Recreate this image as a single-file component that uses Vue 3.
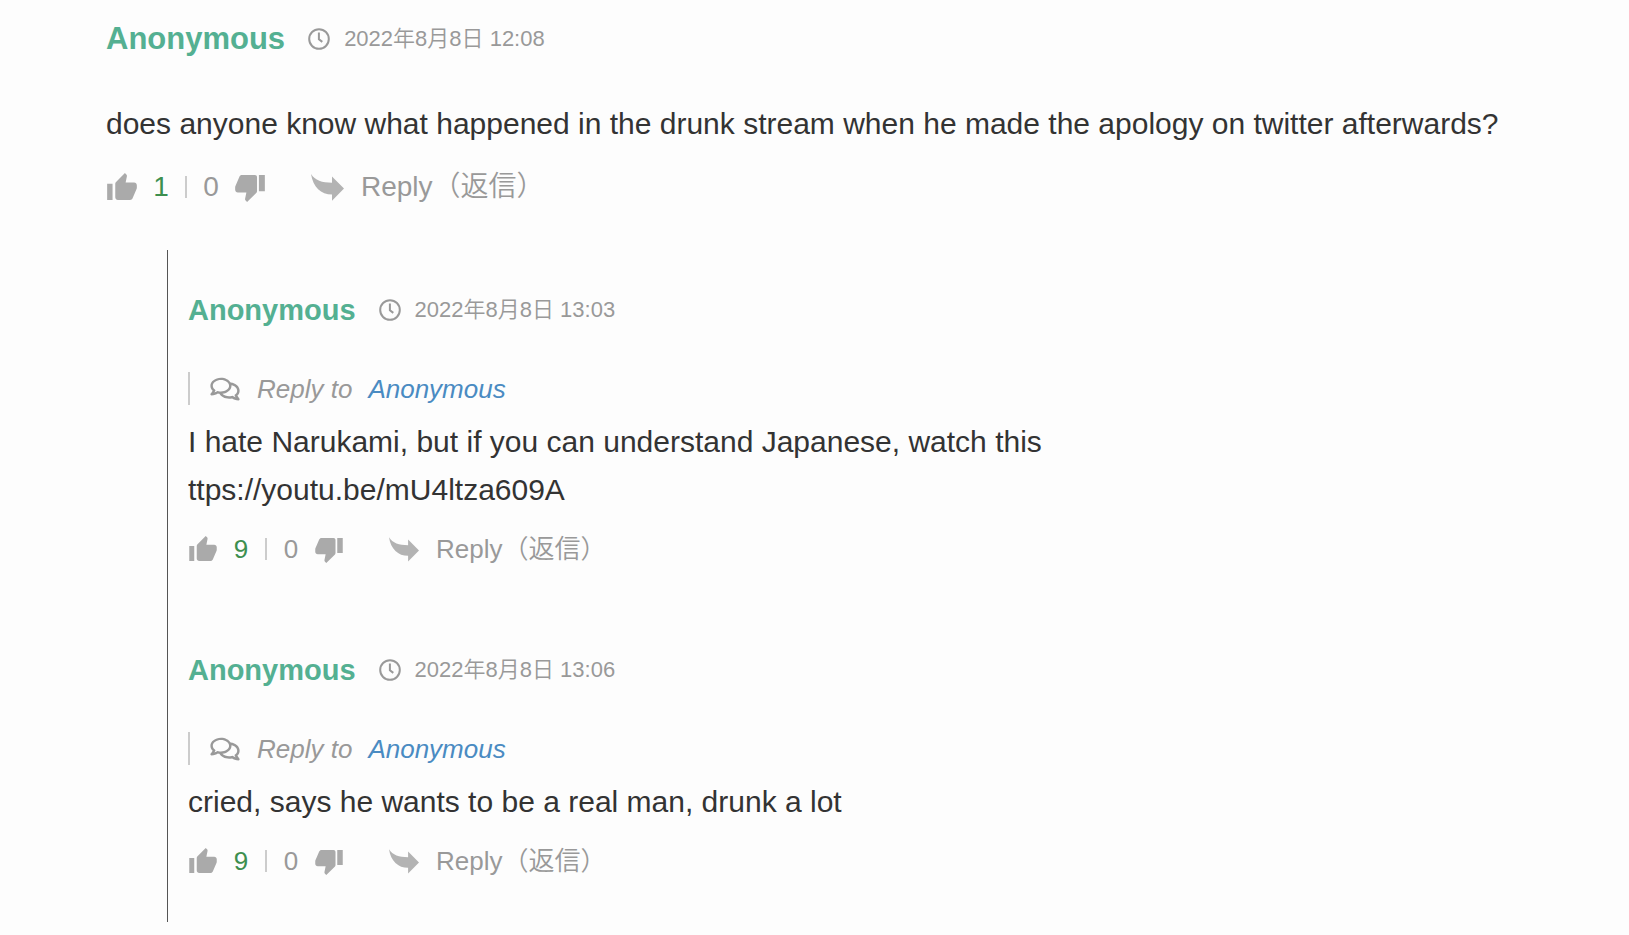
<script setup>
const thread = {
  id: 1,
  author: 'Anonymous',
  date: '2022年8月8日 12:08',
  lines: ['does anyone know what happened in the drunk stream when he made the apology on twitter afterwards?'],
  up: 1,
  down: 0,
}
const replies = [
  {
    id: 2,
    author: 'Anonymous',
    date: '2022年8月8日 13:03',
    to: 'Anonymous',
    lines: ['I hate Narukami, but if you can understand Japanese, watch this', 'ttps://youtu.be/mU4ltza609A'],
    up: 9,
    down: 0,
  },
  {
    id: 3,
    author: 'Anonymous',
    date: '2022年8月8日 13:06',
    to: 'Anonymous',
    lines: ['cried, says he wants to be a real man, drunk a lot'],
    up: 9,
    down: 0,
  },
]
const groups = [
  { name: 'root', items: [thread] },
  { name: 'replies', items: replies },
]
</script>

<template>
  <main class="thread">
    <section v-for="group in groups" :key="group.name" :class="group.name">
      <article v-for="item in group.items" :key="item.id" class="comment">
        <header class="head">
          <span class="author">{{ item.author }}</span>
          <svg class="clock" viewBox="0 0 22 22" aria-hidden="true">
            <circle cx="11" cy="11" r="9.8" />
            <path d="M10.900 4.500V11.200L14.300 13.900" />
          </svg>
          <time class="date">{{ item.date }}</time>
        </header>
        <div v-if="item.to" class="quote">
          <svg class="bubbles" viewBox="0 0 576 512" aria-hidden="true">
            <path d="M532 386.2c27.5-27.1 44-61.1 44-98.2 0-80-76.500-146.100-176.200-157.900C368.300 72.500 294.300 32 208 32 93.100 32 0 103.600 0 192c0 37 16.500 71 44 98.200-15.300 30.700-37.300 54.500-37.700 54.900-6.300 6.700-8.100 16.500-4.400 25 3.600 8.500 12 14 21.200 14 53.500 0 96.700-20.200 125.200-38.800 9.200 2.100 18.700 3.700 28.400 4.900C208.100 407.600 281.800 448 368 448c20.800 0 40.800-2.400 59.800-6.800C456.300 459.700 499.400 480 553 480c9.200 0 17.500-5.500 21.200-14 3.600-8.500 1.900-18.300-4.400-25-.4-.3-22.500-24.100-37.800-54.800zm-392.800-92.300L122.100 305c-14.100 9.100-28.500 16.300-43.100 21.400 2.700-4.700 5.400-9.700 8-14.800l15.500-31.100L77.700 256C64.200 242.600 48 220.700 48 192c0-60.700 73.300-112 160-112s160 51.300 160 112-73.300 112-160 112c-16.500 0-33-1.900-49-5.600l-19.800-4.500zM498.300 352l-24.700 24.400 15.500 31.100c2.600 5.100 5.300 10.100 8 14.800-14.600-5.100-29-12.300-43.100-21.400l-17.100-11.100-19.900 4.600c-16 3.700-32.500 5.600-49 5.600-54 0-102.200-20.100-131.300-49.700C338 339.500 416 272.900 416 192c0-3.400-.4-6.700-.7-10C479.700 196.500 528 238.800 528 288c0 28.700-16.200 50.600-29.700 64z" />
          </svg>
          <span>Reply to</span>
          <a class="target" href="#">{{ item.to }}</a>
        </div>
        <div class="body">
          <p v-for="line in item.lines" :key="line">{{ line }}</p>
        </div>
        <footer class="actions">
          <button type="button" class="vote" aria-label="Vote up">
            <svg viewBox="1 1 22 20" aria-hidden="true">
              <path d="M1 21h4V9H1v12zm22-11c0-1.100-.9-2-2-2h-6.310l.95-4.570.03-.32c0-.41-.17-.79-.44-1.060L14.170 1 7.590 7.590C7.220 7.950 7 8.450 7 9v10c0 1.100.9 2 2 2h9c.83 0 1.540-.5 1.840-1.220l3.020-7.050c.09-.23.14-.47.14-.73v-2z" />
            </svg>
          </button>
          <span class="count up">{{ item.up }}</span>
          <span class="divider"></span>
          <span class="count">{{ item.down }}</span>
          <button type="button" class="vote down" aria-label="Vote down">
            <svg viewBox="1 3 22 20" aria-hidden="true">
              <path d="M15.600 3H6c-.83 0-1.540.5-1.840 1.220l-3.020 7.050c-.09.23-.14.47-.14.73v2c0 1.100.9 2 2 2h6.310l-.95 4.570-.03.32c0 .41.17.79.44 1.060L9.830 23l6.770-6.590c.37-.36.6-.86.6-1.410V4.600c0-1-.6-1.600-1.600-1.600zm3 0v12H23V3h-4.400z" />
            </svg>
          </button>
          <button type="button" class="reply">
            <svg viewBox="0 0 33 27" aria-hidden="true">
              <path d="M0 0c4 6.500 11 8.700 21 8.700V2.500L33 14.500 21 26.800v-6.300C10 20.500 2 13 0 0z" />
            </svg>
            <span>Reply（返信）</span>
          </button>
        </footer>
      </article>
    </section>
  </main>
</template>

<style>
body {
  margin: 0;
  background: #fdfdfd;
}
</style>

<style scoped>
.thread {
  padding: 19px 100px 14px 106px;
  color: #333;
  font-family: "Liberation Sans", Arial, "Noto Sans CJK JP", sans-serif;
  font-size: 30px;
}
.head {
  display: flex;
  align-items: center;
  height: 40px;
  margin-bottom: 41px;
}
.author {
  color: #54b092;
  font-size: 31px;
  font-weight: 700;
}
.clock {
  width: 22px;
  height: 22px;
  margin: 0 14px 0 23px;
  fill: none;
  stroke: #999;
  stroke-width: 2;
}
.date {
  color: #999;
  font-size: 22px;
  font-weight: 350;
  line-height: 24px;
}
.body p {
  margin: 0;
  line-height: 48px;
}
.actions {
  display: flex;
  align-items: center;
  height: 40px;
  margin-top: 19px;
  padding-left: 1px;
  color: #999;
  font-size: 28px;
}
.vote,
.reply {
  display: flex;
  align-items: center;
  padding: 0;
  border: 0;
  background: none;
  color: inherit;
  font: inherit;
  cursor: pointer;
}
.vote svg {
  display: block;
  width: 30px;
  height: 27px;
  margin-bottom: 2px;
  fill: #aaa;
}
.down svg {
  margin: 2px 0 0;
}
.count {
  width: 16px;
  margin: 0 16px;
  line-height: 32px;
  text-align: center;
}
.up {
  color: #3d8f4f;
}
.divider {
  width: 2px;
  height: 22px;
  background: #ccc;
}
.reply {
  margin-left: 46px;
  white-space: nowrap;
  font-weight: 350;
  line-height: 32px;
}
.reply svg {
  width: 33px;
  height: 27px;
  margin-right: 17px;
  fill: #b3b3b3;
}
.replies {
  margin: 43px 0 0 61px;
  padding: 40px 0 41px 20px;
  border-left: 1px solid #555;
}
.replies .comment + .comment {
  margin-top: 81px;
}
.replies .head {
  margin-bottom: 42px;
}
.replies .author {
  font-size: 29px;
}
.replies .actions {
  margin-top: 15px;
  font-size: 26px;
}
.replies .vote svg {
  width: 28px;
  height: 25px;
}
.replies .reply svg {
  width: 30px;
  height: 25px;
}
.quote {
  display: flex;
  align-items: center;
  height: 33px;
  margin-bottom: 13px;
  padding-left: 20px;
  border-left: 2px solid #ccc;
  color: #999;
  font-size: 26px;
  font-style: italic;
  line-height: 32px;
}
.bubbles {
  width: 30px;
  height: 26px;
  margin-right: 17px;
  fill: #999;
}
.target {
  margin-left: 16px;
  color: #4a8bc2;
  text-decoration: none;
}
</style>
